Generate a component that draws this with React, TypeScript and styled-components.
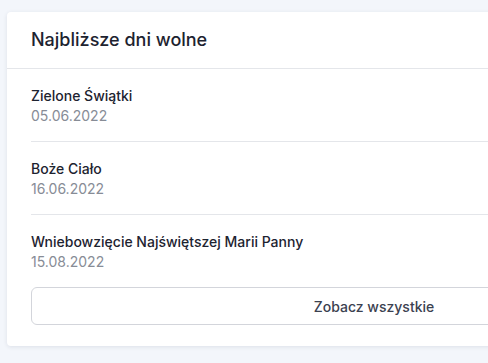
import styled, { createGlobalStyle } from "styled-components";

const holidays = [
  { name: "Zielone Świątki", date: "05.06.2022" },
  { name: "Boże Ciało", date: "16.06.2022" },
  { name: "Wniebowzięcie Najświętszej Marii Panny", date: "15.08.2022" },
];

export default function App() {
  return (
    <>
      <GlobalStyle />
      <Page>
        <Card>
          <Header>Najbliższe dni wolne</Header>
          <List>
            {holidays.map((h) => (
              <Item key={h.date}>
                <Name>{h.name}</Name>
                <DateText>{h.date}</DateText>
              </Item>
            ))}
          </List>
          <Footer>
            <Button>Zobacz wszystkie</Button>
          </Footer>
        </Card>
      </Page>
    </>
  );
}

const GlobalStyle = createGlobalStyle`
  html, body {
    margin: 0;
    background: #f3f6fb;
    font-family: Inter, "Noto Sans", sans-serif;
    overflow: hidden;
  }
`;

const Page = styled.div`
  padding: 12px 0 0 7px;
  height: 363px;
  box-sizing: border-box;
  overflow: hidden;
`;

const Card = styled.div`
  width: 734px;
  background: #fff;
  border-radius: 4px;
  box-shadow: 0 1px 4px rgba(30, 40, 70, 0.1);
`;

const Header = styled.div`
  height: 57px;
  box-sizing: border-box;
  padding: 0 24px 1px;
  display: flex;
  align-items: center;
  font-size: 18px;
  font-weight: 500;
  color: #1d2330;
  border-bottom: 1px solid #e4e6ea;
`;

const List = styled.div`
  padding: 0 24px;
`;

const Item = styled.div`
  padding: 17px 0 15px;
  border-bottom: 1px solid #e4e6ea;

  &:last-child {
    border-bottom: none;
    padding-bottom: 15px;
  }
`;

const Name = styled.div`
  font-size: 14px;
  line-height: 20px;
  font-weight: 500;
  color: #1d2330;
`;

const DateText = styled.div`
  font-size: 14px;
  line-height: 20px;
  color: #878c96;
`;

const Footer = styled.div`
  padding: 0 24px 21px;
`;

const Button = styled.button`
  width: 100%;
  height: 38px;
  background: #fff;
  border: 1px solid #d3d5db;
  border-radius: 6px;
  font-family: inherit;
  font-size: 14px;
  font-weight: 500;
  color: #3b4150;
`;
